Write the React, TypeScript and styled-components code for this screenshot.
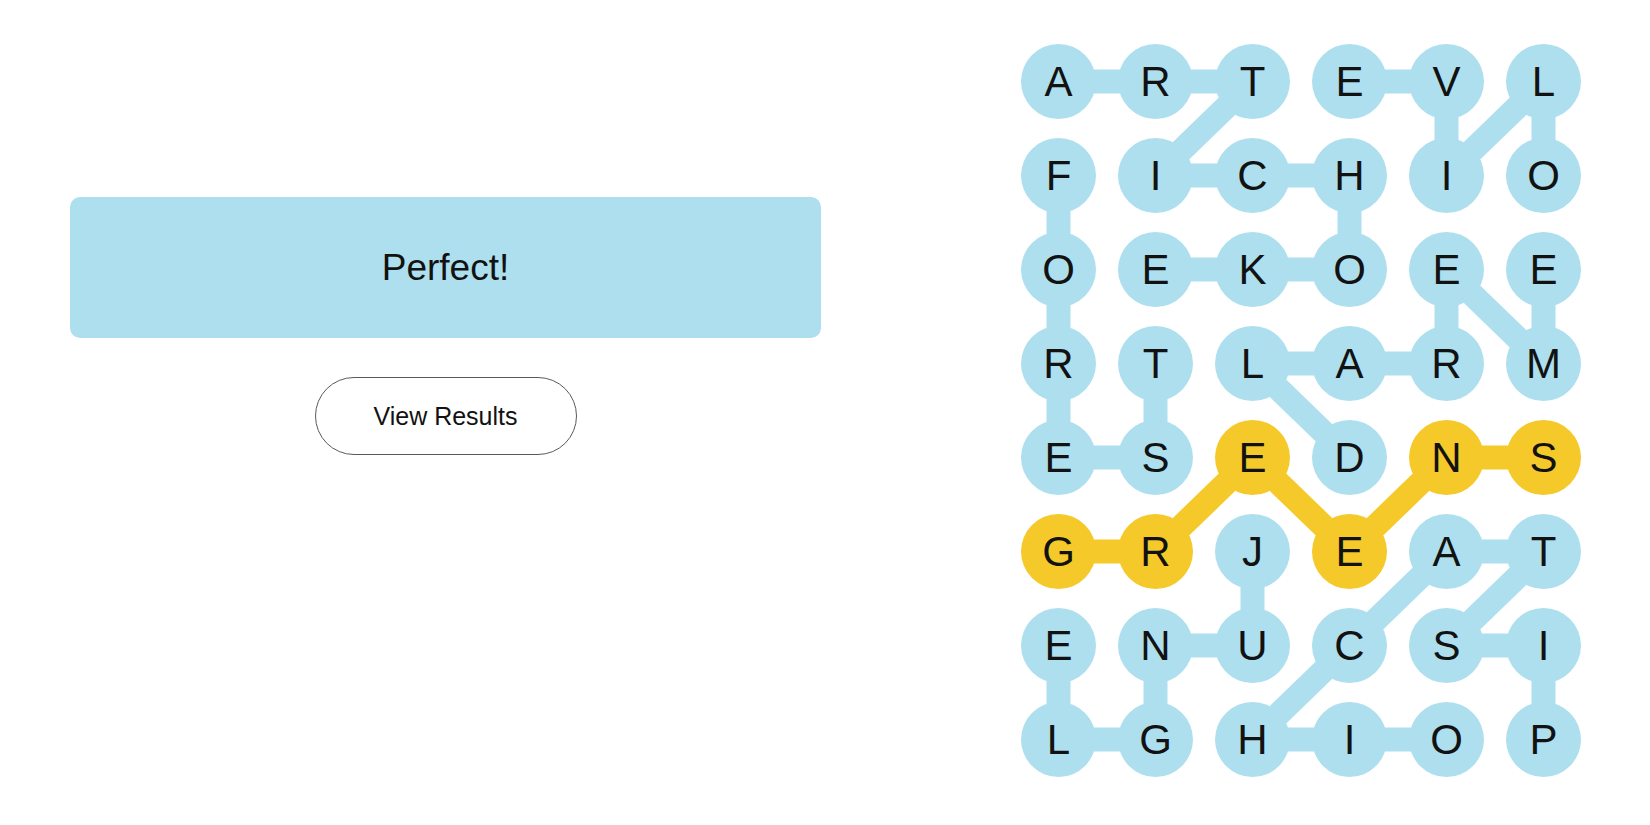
import React from 'react';
import styled, { createGlobalStyle } from 'styled-components';

const BLUE = '#aedfee';
const YELLOW = '#f6c92a';

const CELL = 75;
const COL_GAP = 22;
const ROW_GAP = 19;

const GRID = [
  'ARTEVL',
  'FICHIO',
  'OEKOEE',
  'RTLARM',
  'ESEDNS',
  'GRJEAT',
  'ENUCSI',
  'LGHIOP',
];

type Cell = [number, number];

interface Word {
  path: Cell[];
  spangram?: boolean;
}

// each found word as a list of [row, col]
const WORDS: Word[] = [
  { path: [[0, 0], [0, 1], [0, 2], [1, 1], [1, 2], [1, 3], [2, 3], [2, 2], [2, 1]] },
  { path: [[1, 0], [2, 0], [3, 0], [4, 0], [4, 1], [3, 1]] },
  { path: [[1, 5], [0, 5], [1, 4], [0, 4], [0, 3]] },
  { path: [[2, 5], [3, 5], [2, 4], [3, 4], [3, 3], [3, 2], [4, 3]] },
  { path: [[5, 2], [6, 2], [6, 1], [7, 1], [7, 0], [6, 0]] },
  { path: [[7, 5], [6, 5], [6, 4], [5, 5], [5, 4], [6, 3], [7, 2], [7, 3], [7, 4]] },
  { path: [[5, 0], [5, 1], [4, 2], [5, 3], [4, 4], [4, 5]], spangram: true },
];

const spangramCells = new Set(
  WORDS.filter((w) => w.spangram).flatMap((w) => w.path.map(([r, c]) => `${r}-${c}`)),
);

const cx = (c: number) => CELL / 2 + c * (CELL + COL_GAP);
const cy = (r: number) => CELL / 2 + r * (CELL + ROW_GAP);

const BOARD_W = 6 * CELL + 5 * COL_GAP;
const BOARD_H = 8 * CELL + 7 * ROW_GAP;

const GlobalStyle = createGlobalStyle`
  html, body {
    margin: 0;
    padding: 0;
    background: #ffffff;
  }
  body {
    font-family: 'Liberation Sans', Arial, sans-serif;
    color: #121212;
  }
`;

const App: React.FC = () => {
  return (
    <>
      <GlobalStyle />
      <Page>
        <LeftPanel>
          <ResultCard>Perfect!</ResultCard>
          <ResultsButton type="button">View Results</ResultsButton>
        </LeftPanel>
        <Board>
          <Connectors viewBox={`0 0 ${BOARD_W} ${BOARD_H}`} width={BOARD_W} height={BOARD_H}>
            {WORDS.map((word, i) =>
              word.path.slice(1).map(([r, c], j) => {
                const [pr, pc] = word.path[j];
                return (
                  <line
                    key={`${i}-${j}`}
                    x1={cx(pc)}
                    y1={cy(pr)}
                    x2={cx(c)}
                    y2={cy(r)}
                    stroke={word.spangram ? YELLOW : BLUE}
                    strokeWidth={24}
                  />
                );
              }),
            )}
          </Connectors>
          <LetterGrid>
            {GRID.map((row, r) =>
              row.split('').map((letter, c) => (
                <Letter key={`${r}-${c}`} $spangram={spangramCells.has(`${r}-${c}`)}>
                  {letter}
                </Letter>
              )),
            )}
          </LetterGrid>
        </Board>
      </Page>
    </>
  );
};

export default App;

const Page = styled.main`
  display: flex;
  align-items: flex-start;
  gap: 200px;
  padding: 44px 0 0 70px;
  width: 1650px;
  height: 825px;
  box-sizing: border-box;
`;

const LeftPanel = styled.section`
  display: flex;
  flex-direction: column;
  align-items: center;
  width: 751px;
  padding-top: 153px;
  gap: 39px;
`;

const ResultCard = styled.div`
  display: flex;
  align-items: center;
  justify-content: center;
  width: 100%;
  height: 141px;
  border-radius: 10px;
  background: ${BLUE};
  font-size: 37px;
  color: #121212;
`;

const ResultsButton = styled.button`
  width: 262px;
  height: 78px;
  border: 1px solid #5a5a5a;
  border-radius: 999px;
  background: #ffffff;
  font-family: 'Liberation Sans', Arial, sans-serif;
  font-size: 25px;
  color: #121212;
  cursor: pointer;
`;

const Board = styled.section`
  position: relative;
  width: ${BOARD_W}px;
  height: ${BOARD_H}px;
`;

const Connectors = styled.svg`
  position: absolute;
  inset: 0;
  z-index: 0;
`;

const LetterGrid = styled.div`
  position: relative;
  z-index: 1;
  display: grid;
  grid-template-columns: repeat(6, ${CELL}px);
  grid-auto-rows: ${CELL}px;
  column-gap: ${COL_GAP}px;
  row-gap: ${ROW_GAP}px;
`;

const Letter = styled.div<{ $spangram?: boolean }>`
  display: flex;
  align-items: center;
  justify-content: center;
  border-radius: 50%;
  background: ${({ $spangram }) => ($spangram ? YELLOW : BLUE)};
  font-size: 42px;
  color: #121212;
  user-select: none;
`;
